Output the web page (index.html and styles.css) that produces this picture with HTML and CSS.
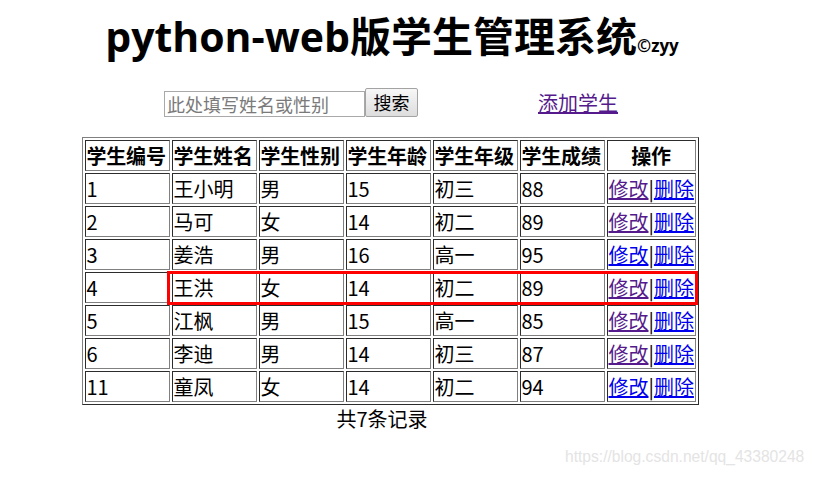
FILE: index.html
```html
<!DOCTYPE html>
<html lang="zh">
<head>
<meta charset="utf-8">
<title>python-web版学生管理系统</title>
<link rel="stylesheet" href="styles.css">
</head>
<body>
<div class="page">
  <h1 class="title">python-web版学生管理系统<span class="copy">©zyy</span></h1>
  <div class="toolbar">
    <form class="search">
      <input class="search-input" type="text" placeholder="此处填写姓名或性别">
      <button class="search-btn" type="button">搜索</button>
    </form>
    <a class="add-link" href="#">添加学生</a>
  </div>
  <div class="table-wrap">
    <table class="students">
      <colgroup>
        <col class="c"><col class="c"><col class="c"><col class="c"><col class="c"><col class="c"><col class="c-op">
      </colgroup>
      <thead>
        <tr>
          <th>学生编号</th>
          <th>学生姓名</th>
          <th>学生性别</th>
          <th>学生年龄</th>
          <th>学生年级</th>
          <th>学生成绩</th>
          <th class="th-op">操作</th>
        </tr>
      </thead>
      <tbody>
        <tr><td>1</td><td>王小明</td><td>男</td><td>15</td><td>初三</td><td>88</td><td class="ops"><a class="visited" href="#">修改</a>|<a href="#">删除</a></td></tr>
        <tr><td>2</td><td>马可</td><td>女</td><td>14</td><td>初二</td><td>89</td><td class="ops"><a class="visited" href="#">修改</a>|<a href="#">删除</a></td></tr>
        <tr><td>3</td><td>姜浩</td><td>男</td><td>16</td><td>高一</td><td>95</td><td class="ops"><a href="#">修改</a>|<a href="#">删除</a></td></tr>
        <tr><td>4</td><td>王洪</td><td>女</td><td>14</td><td>初二</td><td>89</td><td class="ops"><a class="visited" href="#">修改</a>|<a href="#">删除</a></td></tr>
        <tr><td>5</td><td>江枫</td><td>男</td><td>15</td><td>高一</td><td>85</td><td class="ops"><a class="visited" href="#">修改</a>|<a href="#">删除</a></td></tr>
        <tr><td>6</td><td>李迪</td><td>男</td><td>14</td><td>初三</td><td>87</td><td class="ops"><a class="visited" href="#">修改</a>|<a href="#">删除</a></td></tr>
        <tr><td>11</td><td>童凤</td><td>女</td><td>14</td><td>初二</td><td>94</td><td class="ops"><a href="#">修改</a>|<a href="#">删除</a></td></tr>
      </tbody>
    </table>
    <div class="highlight"></div>
  </div>
  <div class="total">共7条记录</div>
</div>
<div class="watermark">https://blog.csdn.net/qq_43380248</div>
</body>
</html>
```
FILE: styles.css
```css
html, body {
  margin: 0;
  padding: 0;
  background: #ffffff;
}

body {
  font-family: "Open Sans", "Noto Sans CJK SC", sans-serif;
  color: #000000;
  width: 816px;
  height: 477px;
  overflow: hidden;
  position: relative;
}

.page {
  width: 780px;
  display: flex;
  flex-direction: column;
  align-items: center;
}

.title {
  margin: 11px 0 0 4px;
  font-size: 41px;
  line-height: 50px;
  font-weight: 700;
  white-space: nowrap;
}

.copy {
  font-size: 17px;
  font-weight: 700;
}

.toolbar {
  margin-top: 17px;
  display: flex;
  align-items: center;
  gap: 120px;
}

.search {
  display: flex;
  align-items: center;
  margin: 0 0 0 2px;
}

.search-input {
  box-sizing: border-box;
  width: 201px;
  height: 26px;
  margin: 2px 0 0 0;
  padding: 0 2px;
  border: 1px solid #a9a9a9;
  font-family: "Noto Sans CJK SC", sans-serif;
  font-size: 18px;
  line-height: 24px;
  outline: none;
}

.search-input::placeholder {
  color: #7a7a7a;
}

.search-btn {
  box-sizing: border-box;
  width: 53px;
  height: 29px;
  margin: 0;
  padding: 0;
  border: 1px solid #a3a3a3;
  border-radius: 2px;
  background: linear-gradient(#f7f7f7, #dddddd);
  font-family: "Noto Sans CJK SC", sans-serif;
  font-size: 18px;
  line-height: 25px;
  color: #000000;
}

.add-link {
  font-family: "Noto Sans CJK SC", sans-serif;
  font-size: 20px;
  line-height: 26px;
  color: #551a8b;
  text-decoration: underline;
}

.table-wrap {
  position: relative;
  margin-top: 20px;
}

.students {
  table-layout: fixed;
  width: 617px;
  border-collapse: separate;
  border-spacing: 2px;
  border: 1px outset #808080;
  font-family: "Noto Sans CJK SC", sans-serif;
  font-size: 20px;
}

.students col.c {
  width: 85px;
}

.students col.c-op {
  width: 89px;
}

.students th,
.students td {
  border: 1px inset #808080;
  padding: 1px;
  line-height: 27px;
  white-space: nowrap;
  overflow: hidden;
  text-align: left;
}

.students th {
  font-weight: 700;
  letter-spacing: -0.2px;
}

.students th.th-op {
  text-align: center;
}

.students a {
  color: #0000ee;
  text-decoration: underline;
}

.students a.visited {
  color: #551a8b;
}

.highlight {
  position: absolute;
  left: 85px;
  top: 134px;
  width: 525px;
  height: 28px;
  border: 3px solid #ff0000;
  pointer-events: none;
}

.total {
  margin-top: 1px;
  padding-right: 16px;
  font-family: "Noto Sans CJK SC", sans-serif;
  font-size: 20px;
  line-height: 26px;
}

.watermark {
  position: absolute;
  left: 565px;
  top: 448px;
  font-family: "Liberation Sans", sans-serif;
  font-size: 15.6px;
  color: #e4e4e4;
  white-space: nowrap;
}
```
